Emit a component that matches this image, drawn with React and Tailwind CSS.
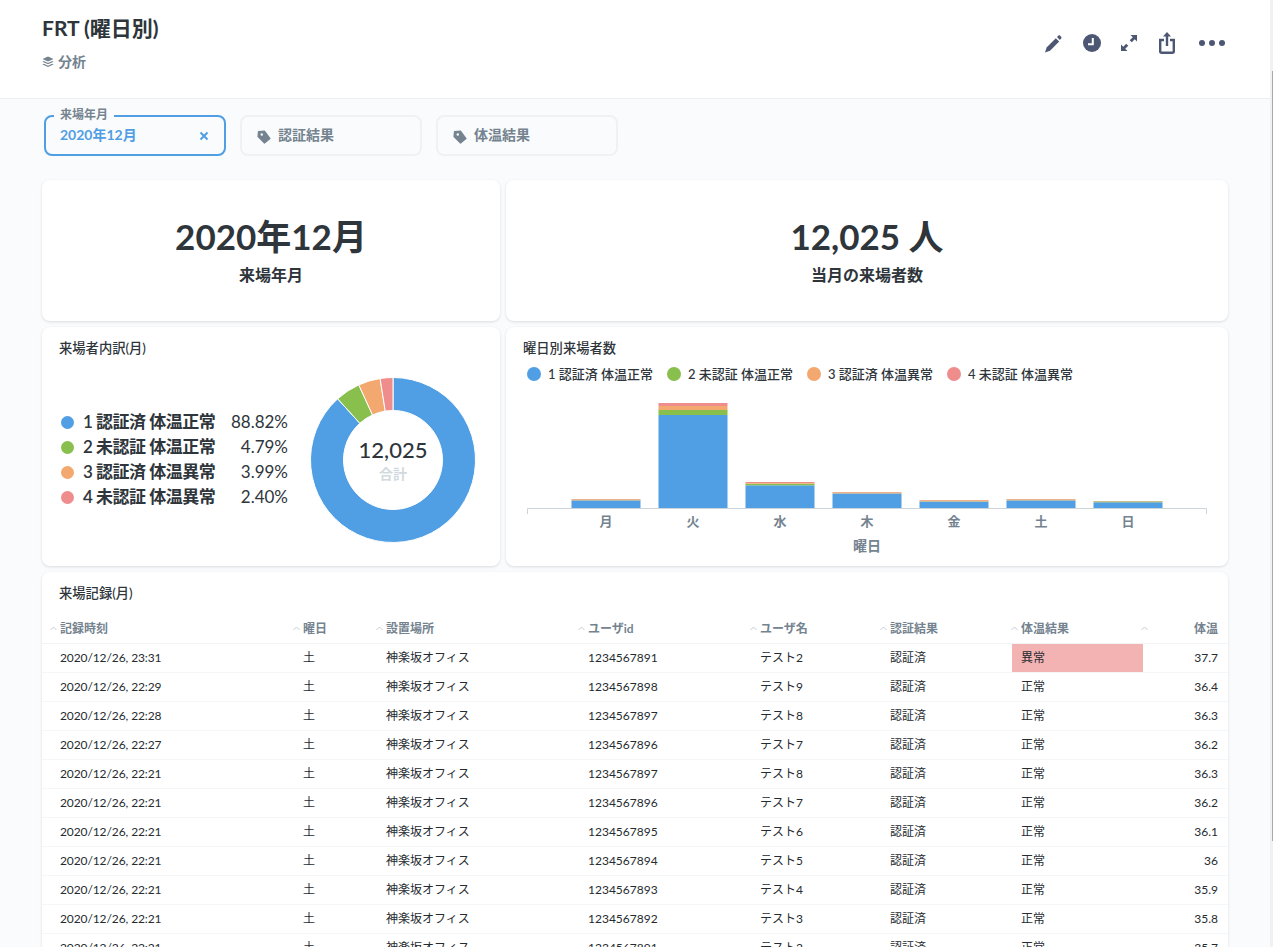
import React from "react";

const rows = [
	["23:31", "1234567891", "テスト2", "異常", "37.7"],
	["22:29", "1234567898", "テスト9", "正常", "36.4"],
	["22:28", "1234567897", "テスト8", "正常", "36.3"],
	["22:27", "1234567896", "テスト7", "正常", "36.2"],
	["22:21", "1234567897", "テスト8", "正常", "36.3"],
	["22:21", "1234567896", "テスト7", "正常", "36.2"],
	["22:21", "1234567895", "テスト6", "正常", "36.1"],
	["22:21", "1234567894", "テスト5", "正常", "36"],
	["22:21", "1234567893", "テスト4", "正常", "35.9"],
	["22:21", "1234567892", "テスト3", "正常", "35.8"],
	["22:21", "1234567891", "テスト2", "正常", "35.7"],
];

const legend = [
	{ color: "bg-[#509ee3]", label: "1 認証済 体温正常", pct: "88.82%" },
	{ color: "bg-[#88bf4d]", label: "2 未認証 体温正常", pct: "4.79%" },
	{ color: "bg-[#f2a86f]", label: "3 認証済 体温異常", pct: "3.99%" },
	{ color: "bg-[#ef8c8c]", label: "4 未認証 体温異常", pct: "2.40%" },
];

const headers = ["記録時刻", "曜日", "設置場所", "ユーザid", "ユーザ名", "認証結果", "体温結果"];

const gridCols = "grid grid-cols-[243px_83px_202px_172px_130px_131px_131px_85px]";

// x, top of each stack, then boundaries blue / green / orange
const bars = [
	{ x: 571.5, label: "月", tops: [499, 499.2, 500.2, 500.4] },
	{ x: 658.5, label: "火", tops: [403, 406, 410, 415] },
	{ x: 745.5, label: "水", tops: [482, 483, 483.7, 485.3] },
	{ x: 832.5, label: "木", tops: [492, 492.2, 493.3, 493.5] },
	{ x: 919.5, label: "金", tops: [500, 500.2, 501.3, 501.6] },
	{ x: 1006.5, label: "土", tops: [499, 499.2, 500.2, 500.4] },
	{ x: 1093.5, label: "日", tops: [501, 501.2, 501.4, 502.3] },
];

function polar(r, pct) {
	const a = (pct / 100) * 2 * Math.PI;
	return [r * Math.sin(a), -r * Math.cos(a)];
}

function slice(from, to) {
	const [x1, y1] = polar(82.5, from);
	const [x2, y2] = polar(82.5, to);
	const [x3, y3] = polar(49.5, to);
	const [x4, y4] = polar(49.5, from);
	const large = to - from > 50 ? 1 : 0;
	return `M${x1} ${y1}A82.5 82.5 0 ${large} 1 ${x2} ${y2}L${x3} ${y3}A49.5 49.5 0 ${large} 0 ${x4} ${y4}Z`;
}

function Donut() {
	return (
		<svg width="170" height="170" viewBox="-85 -85 170 170">
			<path d={slice(0, 88.3)} fill="#509ee3" stroke="#fff" strokeWidth="1" />
			<path d={slice(88.3, 93.2)} fill="#88bf4d" stroke="#fff" strokeWidth="1" />
			<path d={slice(93.2, 97.5)} fill="#f2a86f" stroke="#fff" strokeWidth="1" />
			<path d={slice(97.5, 100)} fill="#ef8c8c" stroke="#fff" strokeWidth="1" />
		</svg>
	);
}

function BarChart() {
	// drawn in page x coords, viewBox starts where the card does
	return (
		<svg width="722" height="170" viewBox="506 385 722 170" className="block">
			{bars.map((b) => (
				<g key={b.x}>
					<rect x={b.x} y={b.tops[3]} width="69" height={508 - b.tops[3]} fill="#509ee3" />
					<rect x={b.x} y={b.tops[2]} width="69" height={b.tops[3] - b.tops[2]} fill="#88bf4d" />
					<rect x={b.x} y={b.tops[1]} width="69" height={b.tops[2] - b.tops[1]} fill="#f2a86f" />
					<rect x={b.x} y={b.tops[0]} width="69" height={b.tops[1] - b.tops[0]} fill="#ef8c8c" />
					<text x={b.x + 34.5} y="526" textAnchor="middle" fontSize="13" fontWeight="700" fill="#74838f">
						{b.label}
					</text>
				</g>
			))}
			<path d="M527.5 514V508.5H1206.5V514" fill="none" stroke="#ccd5dc" strokeWidth="1" />
			<text x="867" y="551" textAnchor="middle" fontSize="14" fontWeight="700" fill="#74838f">
				曜日
			</text>
		</svg>
	);
}

function TagIcon() {
	return (
		<svg width="14" height="14" viewBox="0 0 14 14" className="shrink-0 mt-[4px]">
			<path
				d="M1.500 1.500 7.500 1 13 8.500 7.500 13 1 6.500Z"
				fill="#74838f"
				stroke="#74838f"
				strokeWidth="1.200"
				strokeLinejoin="round"
			/>
			<circle cx="4.800" cy="4.500" r="1.200" fill="#f9fbfc" />
		</svg>
	);
}

function Filter({ label }) {
	return (
		<div className="w-[182px] h-[41px] flex items-center pl-[15px] pb-[2px] gap-[7px] rounded-lg border-2 border-[#f0f1f3] text-sm font-bold text-[#74838f]">
			<TagIcon />
			<span>{label}</span>
		</div>
	);
}

function Card({ className, children }) {
	return (
		<div className={"bg-white rounded-lg shadow-[0_1px_3px_rgba(0,0,0,0.13)] " + className}>{children}</div>
	);
}

function Scalar({ value, label, className }) {
	return (
		<Card className={"h-[141px] flex flex-col items-center text-[#2e353b] " + className}>
			<div className="mt-[30px] text-[35px] leading-[52px] font-bold">{value}</div>
			<div className="mt-[2px] text-base leading-[22px] font-bold">{label}</div>
		</Card>
	);
}

export default function App() {
	return (
		<div
			className="flex h-[947px] w-full overflow-hidden bg-[#f9fbfc]"
			style={{ fontFamily: '"Lato", "Noto Sans CJK JP", sans-serif' }}>
			<div className="w-[1270px] shrink-0">
				{/* header */}
				<div className="h-[99px] bg-white border-b border-[#eceff1] flex justify-between pl-[42px] pr-[45px]">
					<div>
						<h1 className="mt-[14px] text-[21px] leading-[28px] font-bold text-[#2e353b]">FRT (曜日別)</h1>
						<div className="mt-[10px] flex items-center gap-[4px] text-sm leading-[20px] font-bold text-[#74838f]">
							<svg width="12" height="12" viewBox="0 0 12 12" fill="#74838f">
								<path d="M6 .5 11.500 3 6 5.500.5 3 6 .5Z" />
								<path d="M1.800 5 6 7l4.200-2 1.300.7L6 8.300.5 5.700 1.800 5Z" />
								<path d="M1.800 7.700 6 9.700l4.200-2 1.300.7L6 11 .5 8.400l1.300-.7Z" />
							</svg>
							<span>分析</span>
						</div>
					</div>
					<div className="flex items-start pt-[32px] text-[#4c5773]">
						<svg width="17" height="18" viewBox="0 0 17 18" fill="currentColor" className="mt-[3px]">
							<path d="M0 17.500 1.600 12.400 10.800 3.200 14.200 6.600 5 15.800 0 17.500Z" />
							<path d="M12 2 13.300.7c.6-.6 1.200-.6 1.800 0l1 1c.6.600.6 1.200 0 1.800L14.900 5 12 2Z" />
						</svg>
						<svg width="18" height="18" viewBox="0 0 18 18" className="ml-[21px] mt-[2px]">
							<circle cx="9" cy="9" r="9" fill="currentColor" />
							<path d="M9.800 4v6.200H5" fill="none" stroke="#fff" strokeWidth="2" />
						</svg>
						<svg width="16" height="16" viewBox="0 0 16 16" fill="currentColor" className="ml-[20px] mt-[3px]">
							<path d="M9.500 0H16v6.500L13.700 4.200 10.800 7.300 8.700 5.200l3.100-2.900L9.500 0Z" />
							<path d="M0 9.500V16h6.500L4.200 13.700 7.300 10.800 5.200 8.700l-2.900 3.100L0 9.500Z" />
						</svg>
						<svg width="16" height="22" viewBox="0 0 16 22" fill="none" className="ml-[22px]">
							<path d="M5 8H1.200v11.300A1.500 1.500 0 0 0 2.700 20.800h10.600a1.500 1.500 0 0 0 1.500-1.500V8H11" stroke="currentColor" strokeWidth="2.400" />
							<path d="M8 14V2" stroke="currentColor" strokeWidth="2.400" />
							<path d="M8 0l4 4.500H4L8 0Z" fill="currentColor" />
						</svg>
						<div className="ml-[24px] mt-[8px] flex gap-[4px]">
							<div className="w-[6px] h-[6px] rounded-full bg-[#4c5773]" />
							<div className="w-[6px] h-[6px] rounded-full bg-[#4c5773]" />
							<div className="w-[6px] h-[6px] rounded-full bg-[#4c5773]" />
						</div>
					</div>
				</div>

				{/* filters */}
				<div className="flex gap-[14px] pl-[44px] pt-[16px]">
					<div className="relative w-[182px] h-[41px] flex items-center justify-between pl-[14px] pr-[15px] pb-[2px] rounded-lg border-2 border-[#509ee3] text-sm font-bold text-[#509ee3]">
						<span className="absolute -top-[10px] left-[8px] px-[6px] bg-[#f9fbfc] text-xs leading-[16px] text-[#74838f]">
							来場年月
						</span>
						<span>2020年12月</span>
						<svg width="10" height="10" viewBox="0 0 10 10" stroke="#509ee3" strokeWidth="2" className="mt-[2px]">
							<path d="M1.500 1.500l7 7M8.500 1.500l-7 7" />
						</svg>
					</div>
					<Filter label="認証結果" />
					<Filter label="体温結果" />
				</div>

				{/* cards */}
				<div className="mt-[24px] ml-[42px] w-[1186px] flex flex-col gap-[6px]">
					<div className="flex gap-[6px]">
						<Scalar value="2020年12月" label="来場年月" className="w-[458px]" />
						<Scalar value="12,025 人" label="当月の来場者数" className="w-[722px]" />
					</div>
					<div className="flex gap-[6px]">
						<Card className="w-[458px] h-[239px] relative">
							<div className="pl-[17px] pt-[13px] text-[13.3px] leading-[16px] font-medium text-[#2e353b]">来場者内訳(月)</div>
							<div className="flex items-center pl-[19px] mt-[19px]">
								<div className="w-[227px] flex flex-col gap-[2px] mb-[1px]">
									{legend.map((l) => (
										<div key={l.label} className="flex items-center h-[23px] text-[#2e353b]">
											<div className={"w-[13px] h-[13px] rounded-full " + l.color} />
											<span className="ml-[9px] text-[17px] font-semibold tracking-[-0.5px]">{l.label}</span>
											<span className="ml-auto text-[17px] font-normal">{l.pct}</span>
										</div>
									))}
								</div>
								<div className="relative ml-[20px] w-[170px] h-[170px]">
									<Donut />
									<div className="absolute inset-0 flex flex-col items-center justify-center">
										<div className="text-[22px] leading-[30px] font-medium text-[#2e353b] -mt-[3px]">12,025</div>
										<div className="text-sm leading-[18px] font-bold text-[#d2dade]">合計</div>
									</div>
								</div>
							</div>
						</Card>
						<Card className="w-[722px] h-[239px]">
							<div className="pl-[17px] pt-[13px] text-[13.3px] leading-[16px] font-medium text-[#2e353b]">曜日別来場者数</div>
							<div className="flex pl-[21px] mt-[9px] text-[13px] leading-[18px] font-medium text-[#2e353b]">
								{legend.map((l) => (
									<div key={l.label} className="w-[140px] flex items-center">
										<div className={"w-[14px] h-[14px] rounded-full " + l.color} />
										<span className="ml-[7px]">{l.label}</span>
									</div>
								))}
							</div>
							<div className="mt-[2px]">
								<BarChart />
							</div>
						</Card>
					</div>
					<Card className="rounded-b-none h-[400px]">
						<div className="pl-[17px] pt-[13px] text-[13.3px] leading-[16px] font-medium text-[#2e353b]">来場記録(月)</div>
						<div className={gridCols + " pl-[9px] mt-[13px] h-[30px] items-center border-b border-[#f3f4f5] text-xs font-bold text-[#74838f]"}>
							{headers.map((h) => (
								<div key={h} className="flex items-center">
									<svg width="7" height="5" viewBox="0 0 7 5" fill="none" stroke="#c6ced6" className="-ml-px mr-[3px]">
										<path d="M.5 4 3.500 1l3 3" />
									</svg>
									<span>{h}</span>
								</div>
							))}
							<div className="flex items-center justify-between pr-[10px]">
								<svg width="7" height="5" viewBox="0 0 7 5" fill="none" stroke="#c6ced6" className="-ml-[2px]">
									<path d="M.5 4 3.500 1l3 3" />
								</svg>
								<span>体温</span>
							</div>
						</div>
						{rows.map((r, i) => (
							<div key={i} className={gridCols + " pl-[9px] h-[29px] items-stretch border-b border-[#f5f6f7] text-xs text-[#262b30]"}>
								<div className="pl-[9px] flex items-center tracking-[-0.1px]">2020/12/26, {r[0]}</div>
								<div className="pl-[9px] flex items-center">土</div>
								<div className="pl-[9px] flex items-center">神楽坂オフィス</div>
								<div className="pl-[9px] flex items-center">{r[1]}</div>
								<div className="pl-[9px] flex items-center">{r[2]}</div>
								<div className="pl-[9px] flex items-center">認証済</div>
								<div className={"pl-[9px] flex items-center " + (r[3] === "異常" ? "bg-[#f4b3b3]" : "")}>{r[3]}</div>
								<div className="pr-[10px] flex items-center justify-end">{r[4]}</div>
							</div>
						))}
					</Card>
				</div>
			</div>
			{/* scrollbar */}
			<div className="flex-1 flex flex-col items-end bg-[#f1f1f1]">
				<div className="mt-[71px] w-px h-[770px] bg-[#a8a8a8]" />
			</div>
		</div>
	);
}
